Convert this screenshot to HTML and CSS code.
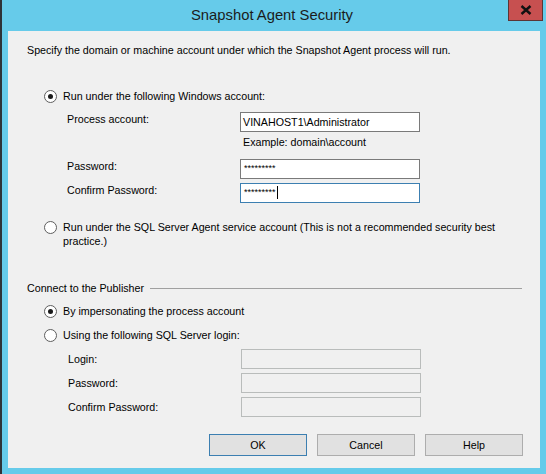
FILE: index.html
```html
<!DOCTYPE html>
<html>
<head>
<meta charset="utf-8">
<link rel="stylesheet" href="styles.css">
</head>
<body>
<div class="window">
  <div class="titlebar">
    <span class="title">Snapshot Agent Security</span>
    <div class="close"><svg width="12" height="10" viewBox="0 0 12 10"><path d="M1.5 1 L10.5 9 M10.5 1 L1.5 9" stroke="#111" stroke-width="2.4"/></svg></div>
  </div>
  <div class="panel">
    <p class="intro">Specify the domain or machine account under which the Snapshot Agent process will run.</p>

    <div class="option opt1"><span class="radio checked"></span><span class="otext">Run under the following Windows account:</span></div>
    <div class="fields">
      <label class="flabel">Process account:</label>
      <div class="input">VINAHOST1\Administrator</div>
      <span></span>
      <div class="hint">Example: domain\account</div>
      <label class="flabel r2">Password:</label>
      <div class="input pw r2">*********</div>
      <label class="flabel r3">Confirm Password:</label>
      <div class="input pw focus r3">*********<span class="caret"></span></div>
    </div>

    <div class="option opt2"><span class="radio"></span><span class="otext wrap">Run under the SQL Server Agent service account (This is not a recommended security best practice.)</span></div>

    <div class="group"><span>Connect to the Publisher</span><span class="rule"></span></div>

    <div class="option opt3"><span class="radio checked"></span><span class="otext">By impersonating the process account</span></div>
    <div class="option opt4"><span class="radio"></span><span class="otext">Using the following SQL Server login:</span></div>

    <div class="fields login">
      <label class="flabel">Login:</label>
      <div class="input disabled"></div>
      <label class="flabel">Password:</label>
      <div class="input disabled"></div>
      <label class="flabel">Confirm Password:</label>
      <div class="input disabled"></div>
    </div>

    <div class="buttons">
      <button class="btn default">OK</button>
      <button class="btn">Cancel</button>
      <button class="btn">Help</button>
    </div>
  </div>
</div>
</body>
</html>
```

FILE: styles.css
```css
* { box-sizing: border-box; }
html, body { margin: 0; padding: 0; }
body {
  width: 546px;
  height: 474px;
  overflow: hidden;
  font-family: "Liberation Sans", Arial, sans-serif;
  font-size: 10.7px;
  color: #000;
}
.window {
  width: 546px;
  height: 474px;
  background: #66cbea;
  border-left: 2px solid #2e3338;
  position: relative;
}
.titlebar {
  height: 31px;
  display: flex;
  justify-content: center;
  align-items: center;
}
.title {
  font-size: 14.8px;
  color: #1b1b1b;
  margin-left: -4px;
  margin-top: -1px;
}
.close {
  position: absolute;
  left: 506px;
  top: -1px;
  width: 35px;
  height: 22px;
  background: #c75050;
  border: 1px solid #5b3535;
  display: flex;
  align-items: center;
  justify-content: center;
}
.panel {
  margin-left: 6px;
  width: 532px;
  height: 437px;
  background: #f0f0f0;
  padding-top: 12px;
  position: relative;
}
.intro {
  margin: 0 0 0 19px;
  line-height: 14px;
}
.option {
  display: flex;
  align-items: flex-start;
  margin-left: 36px;
  line-height: 14px;
}
.radio {
  width: 13px;
  height: 13px;
  border: 1px solid #5e5e5e;
  border-radius: 50%;
  background: #fff;
  flex: none;
  margin-top: 1px;
  margin-right: 6px;
  display: flex;
  align-items: center;
  justify-content: center;
}
.radio.checked::after {
  content: "";
  width: 5px;
  height: 5px;
  border-radius: 50%;
  background: #1a1a1a;
}
.opt1 { margin-top: 32px; }
.opt2 { margin-top: 17px; }
.wrap { width: 440px; }
.opt3 { margin-top: 9px; }
.opt4 { margin-top: 10px; }

.fields {
  display: grid;
  grid-template-columns: 173px 180px;
  margin-left: 59px;
  margin-top: 9px;
  align-items: start;
}
.flabel { line-height: 14px; padding-top: 0; }
.input {
  height: 20px;
  border: 1px solid #7a7a7a;
  background: #fff;
  padding: 2px 0 0 2px;
  line-height: 14px;
  white-space: nowrap;
  position: relative;
}
.hint {
  margin-top: 3px;
  line-height: 14px;
  padding-left: 3px;
}
.r2 { margin-top: 10px; }
.r3 { margin-top: 4px; }
.pw {
  font-size: 9px;
  letter-spacing: 0;
  padding-top: 1px;
  padding-left: 3px;
}
.focus { border-color: #3c7fb1; }
.caret {
  display: inline-block;
  width: 1px;
  height: 13px;
  background: #000;
  vertical-align: top;
  margin-top: 1px;
  margin-left: 1px;
}
.group {
  display: flex;
  align-items: center;
  margin: 33px 0 0 19px;
  padding-right: 18px;
  line-height: 14px;
}
.rule {
  flex: 1;
  margin-left: 6px;
  height: 1px;
  background: #a0a0a0;
}
.fields.login {
  margin-left: 60px;
  margin-top: 7px;
  grid-template-columns: 173px 180px;
  row-gap: 4px;
  align-items: center;
}
.input.disabled {
  border-color: #b9bcbb;
  background: #f0f0f0;
}
.buttons {
  display: flex;
  justify-content: flex-end;
  gap: 10px;
  padding-right: 17px;
  margin-top: 17px;
}
.btn {
  width: 98px;
  height: 22px;
  border: 1px solid #adadad;
  background: #e1e1e1;
  font-family: "Liberation Sans", Arial, sans-serif;
  font-size: 10.7px;
  color: #000;
  padding: 0;
}
.btn.default { border-color: #3c7fb1; }
```
